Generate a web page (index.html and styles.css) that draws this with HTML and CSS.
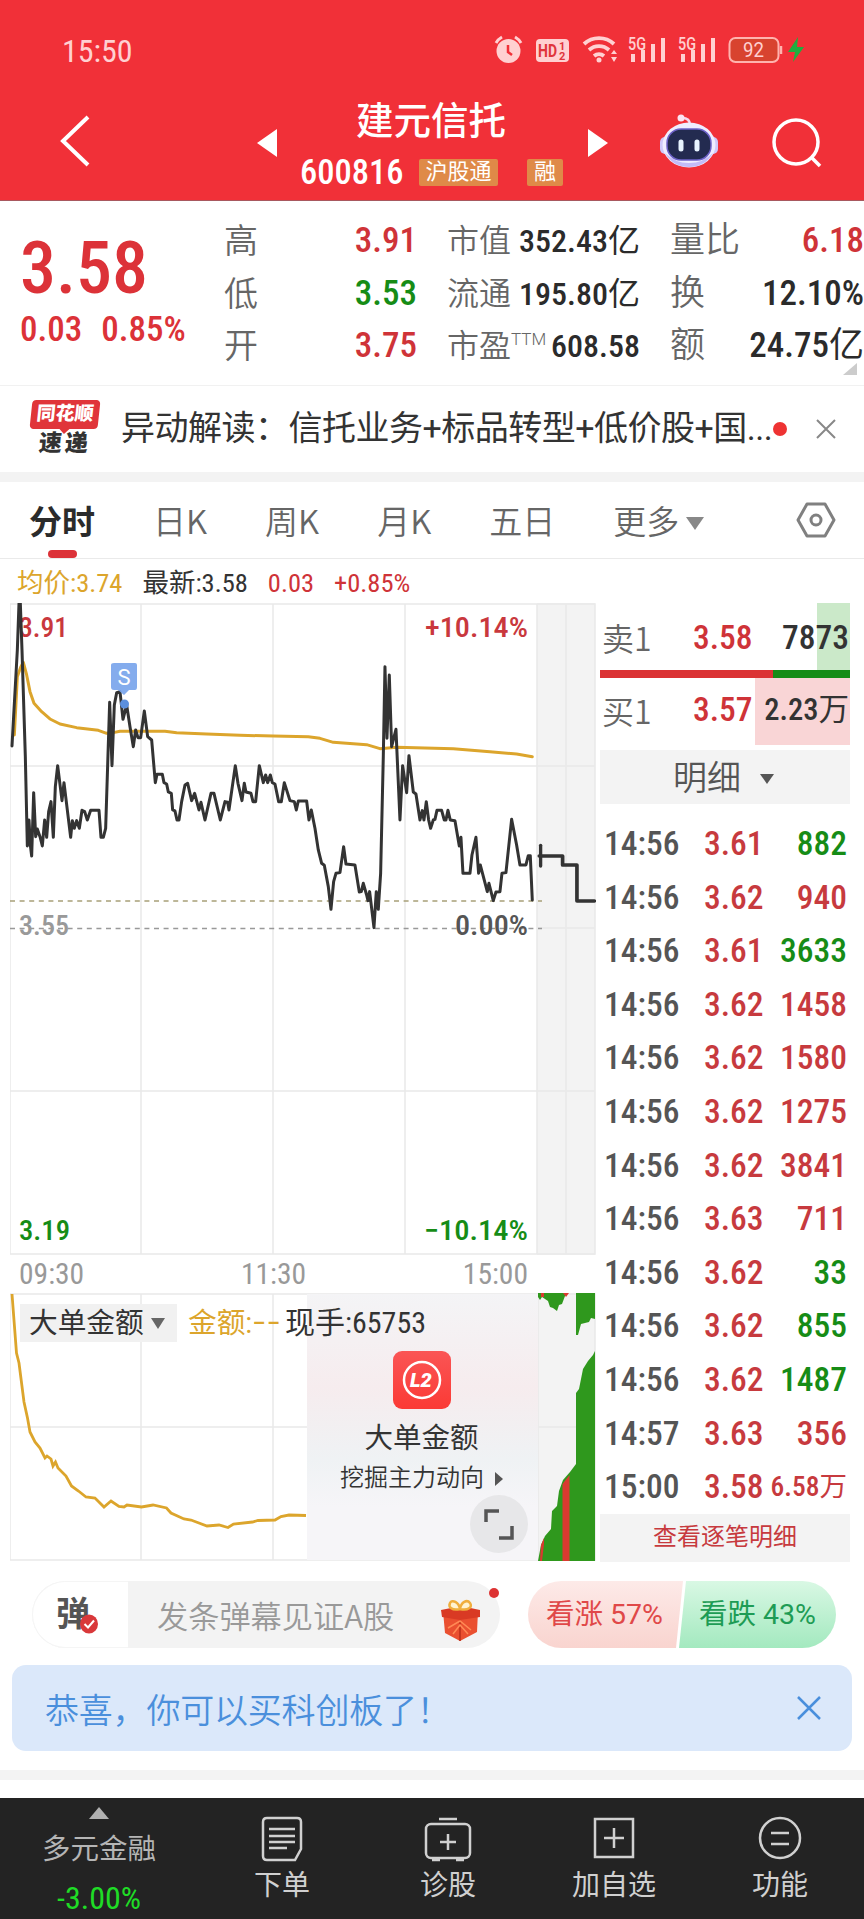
FILE: index.html
```html
<!DOCTYPE html>
<html lang="zh-CN">
<head>
  <meta charset="UTF-8" />
  <meta name="viewport" content="width=device-width, initial-scale=1.0"/>
  <title>建元信托 600816</title>
  <link rel="stylesheet" href="styles.css">
</head>
<body>

  <header>
    <div class="status">
      <span class="num clock">15:50</span>
      <svg width="320" height="36" viewBox="490 32 320 36">
        <g fill="#ffd0d1">
          <circle cx="508.500" cy="51" r="12"/>
          <path d="M496 43a16 16 0 0 1 6-6M521 43a16 16 0 0 0-6-6" fill="none" stroke="#ffd0d1" stroke-width="3"/>
          <path d="M508 45v7l4 3" fill="none" stroke="#f13038" stroke-width="2.500"/>
          <rect x="536" y="39" width="33" height="23" rx="4"/>
          <path d="M584 44a22 22 0 0 1 30 0M589 50a15 15 0 0 1 20 0M594 56a8 8 0 0 1 10 0" fill="none" stroke="#ffd0d1" stroke-width="3.800"/>
          <circle cx="599" cy="60" r="2.500"/>
          <path d="M611 54l3-4 3 4zM611 57l3 5 3-5z"/>
          <path d="M631 54h4v8h-4zM641 50h4v12h-4zM651 44h4v18h-4zM661 38h4v24h-4z"/>
          <path d="M681 54h4v8h-4zM691 50h4v12h-4zM701 44h4v18h-4zM711 38h4v24h-4z"/>
          <rect x="729.500" y="38" width="49" height="24" rx="6" fill="#d8432f" stroke="#ffb3ae" stroke-width="2"/>
          <path d="M781 46v8" stroke="#ffb3ae" stroke-width="2.500"/>
          <text x="538" y="57" font-size="18" font-weight="700" fill="#e0353c" textLength="19" lengthAdjust="spacingAndGlyphs">HD</text>
          <text x="559" y="50" font-size="11" font-weight="700" fill="#e0353c">1</text>
          <text x="559" y="60" font-size="11" font-weight="700" fill="#e0353c">2</text>
          <text x="628" y="50" font-size="18" font-weight="500" textLength="18" lengthAdjust="spacingAndGlyphs">5G</text>
          <text x="678" y="50" font-size="18" font-weight="500" textLength="18" lengthAdjust="spacingAndGlyphs">5G</text>
          <text x="743" y="57" font-size="20" textLength="21" lengthAdjust="spacingAndGlyphs">92</text>
        </g>
        <path d="M798 37l-10 15h7l-2 10 11-15h-7z" fill="#1fae3f"/>
      </svg>
    </div>
    <div class="titlebar">
      <svg class="back" width="34" height="54" viewBox="0 0 34 54"><path d="M29 3L4 27l25 24" fill="none" stroke="#fff" stroke-width="4"/></svg>
      <svg class="prev" width="20" height="28" viewBox="0 0 20 28"><path d="M20 0v28L0 14z" fill="#fff"/></svg>
      <div class="stock">
        <h1>建元信托</h1>
        <div class="code"><span class="num">600816</span><i>沪股通</i><i>融</i></div>
      </div>
      <svg class="next" width="20" height="28" viewBox="0 0 20 28"><path d="M0 0v28l20-14z" fill="#fff"/></svg>
      <svg class="robot" width="60" height="56" viewBox="0 0 60 56">
        <path d="M31 11Q31 4 23 4" fill="none" stroke="#f6d9ee" stroke-width="2.500"/>
        <circle cx="22" cy="4" r="3.500" fill="#fbe4f3"/>
        <rect x="1" y="23" width="58" height="17" rx="5" fill="#cfc8fa"/>
        <ellipse cx="30" cy="31" rx="26.500" ry="22.500" fill="#efedff"/>
        <path d="M6 39q8 14 24 14t24-14q-10 10-24 10T6 39z" fill="#c3bbf8"/>
        <rect x="8" y="15" width="44" height="31" rx="14" fill="#232b50" stroke="#6d62c8" stroke-width="1.500"/>
        <path d="M22 28v7M38 28v7" stroke="#e8f4ff" stroke-width="5" stroke-linecap="round"/>
      </svg>
      <svg class="search" width="52" height="52" viewBox="0 0 52 52" fill="none" stroke="#fff" stroke-width="3.500"><circle cx="25" cy="25" r="22"/><path d="M41 41l8 8"/></svg>
    </div>
  </header>

  <section class="quote">
    <div class="price">
      <div class="num last">3.58</div>
      <div class="change"><span class="num">0.03</span><span class="num">0.85%</span></div>
    </div>
    <dl class="c1">
      <dt>高</dt><dd class="num red">3.91</dd>
      <dt>低</dt><dd class="num green">3.53</dd>
      <dt>开</dt><dd class="num red">3.75</dd>
    </dl>
    <dl class="c2">
      <dt>市值</dt><dd class="num">352.43<u>亿</u></dd>
      <dt>流通</dt><dd class="num">195.80<u>亿</u></dd>
      <dt>市盈<sup>TTM</sup></dt><dd class="num">608.58</dd>
    </dl>
    <dl class="c3">
      <dt>量比</dt><dd class="num red">6.18</dd>
      <dt>换</dt><dd class="num">12.10%</dd>
      <dt>额</dt><dd class="num">24.75<u>亿</u></dd>
    </dl>
  </section>

  <section class="news">
    <div class="logo"><b>同花顺</b><em>速递</em></div>
    <p>异动解读：信托业务+标品转型+低价股+国...</p>
    <span class="dot"></span>
    <svg width="22" height="22" viewBox="0 0 22 22"><path d="M2 2l18 18M20 2L2 20" stroke="#888" stroke-width="2"/></svg>
  </section>

  <nav class="tabs">
    <a class="on">分时</a><a>日K</a><a>周K</a><a>月K</a><a>五日</a><a class="more">更多</a>
    <svg width="40" height="38" viewBox="0 0 40 38" fill="none" stroke="#808080" stroke-width="3"><path d="M11 3h18l9 16-9 16H11L2 19z" stroke-linejoin="round"/><circle cx="20" cy="19" r="5"/></svg>
  </nav>

  <main>
    <div class="left">
      <div class="legend">
        <span class="num gold">均价:3.74</span><span class="num">最新:3.58</span><span class="num red">0.03</span><span class="num red">+0.85%</span>
      </div>

      <svg class="chart" width="586" height="652" viewBox="0 0 586 652">
        <rect x="527" y="0" width="58" height="652" fill="#f3f3f3"/>
        <g fill="none" stroke="#e9e9e9" stroke-width="1.500">
          <path d="M0 1H585V651H0zM131 1V651M263 1V651M395 1V651M527 1V651M556 1V651M0 163H585M0 488H585M527 325H585"/>
        </g>
        <g stroke="#999" stroke-width="1.500" stroke-dasharray="5 4.600">
          <path d="M0 298H532" stroke="#a8a078"/>
          <path d="M0 325.500H532"/>
        </g>
        <g class="num" font-size="28">
          <text x="9" y="34" fill="#c9383d" textLength="49" lengthAdjust="spacingAndGlyphs">3.91</text>
          <text x="415" y="34" fill="#c9383d" textLength="103" lengthAdjust="spacingAndGlyphs">+10.14%</text>
          <text x="9" y="332" fill="#999" textLength="50" lengthAdjust="spacingAndGlyphs">3.55</text>
          <text x="445" y="332" fill="#555" textLength="73" lengthAdjust="spacingAndGlyphs">0.00%</text>
          <text x="9" y="637" fill="#168c16" textLength="51" lengthAdjust="spacingAndGlyphs">3.19</text>
          <text x="414" y="637" fill="#168c16" textLength="104" lengthAdjust="spacingAndGlyphs">−10.14%</text>
        </g>
        <g fill="none" stroke-linejoin="round" stroke-linecap="round" stroke-width="9">
          <g stroke="#dca52c" transform="translate(-10 -13) scale(.3333)">
            <polyline points="43,435 52,260 62,232 70,217 80,255 90,305 102,340 125,365 150,387 180,402 230,413 295,421 320,430 340,428 360,424 495,424 530,428 620,432 720,436 820,438 925,440 960,445 1000,457 1100,464 1140,476 1190,472 1360,476 1470,485 1550,492 1597,500"/>
          </g>
          <g stroke="#333" transform="translate(-10 -13) scale(.3333)">
            <polyline points="36,468 52,180 57,40 61,40 66,180 76,500 82,768 87,690 91,765 95,798 101,608 107,740 112,717 120,740 127,768 134,690 140,742 146,665 153,635 160,742 166,590 173,527 186,632 192,578 212,742 217,692 223,715 230,692 238,715 246,661 254,665 262,690 272,661 297,661 303,742 310,742 317,715 329,337 336,527 343,345 350,308 360,305 369,388 380,345 390,410 400,470 407,420 414,443 422,443 433,363 443,440 455,450 466,578 471,553 487,553 492,578 500,582 505,606 514,610 518,660 525,663 531,690 537,690 545,635 555,585 563,580 575,632 584,610 597,660 603,637 615,690 633,610 642,610 661,690 675,635 683,637 687,660 706,527 714,580 726,632 733,580 738,606 753,610 759,635 767,635 778,527 790,578 797,555 803,578 811,555 817,578 825,582 836,635 844,635 853,578 870,632 883,635 889,660 895,633 920,633 927,690 934,660 945,715 955,780 965,820 973,826 985,890 993,958 1001,875 1008,850 1020,848 1031,770 1038,822 1065,825 1078,906 1084,905 1090,880 1100,915 1104,932 1109,905 1122,1013 1129,905 1135,958 1142,850 1150,500 1155,230 1161,445 1168,255 1175,470 1188,418 1200,690 1208,527 1220,608 1227,497 1240,606 1248,612 1260,690 1267,662 1272,690 1279,635 1286,690 1292,715 1300,690 1305,688 1311,661 1325,661 1333,690 1338,690 1344,661 1351,690 1365,692 1378,768 1383,742 1389,850 1410,850 1416,795 1428,742 1436,850 1441,825 1462,905 1467,880 1480,932 1488,906 1500,905 1506,850 1518,848 1535,688 1550,765 1560,825 1578,825 1585,797 1591,797 1597,930"/>
            <polyline points="1622,766 1622,828" stroke-width="10"/>
            <polyline points="1618,798 1688,798 1688,825 1731,825 1731,933 1783,933" stroke-width="11"/>
          </g>
        </g>
        <path d="M104 60h21q2 0 2 2v22q0 3-2 3h-6l-5 5-6-5h-4q-3 0-3-3V62q0-2 3-2z" fill="#7ba6ec" fill-opacity=".93"/>
        <circle cx="114.500" cy="101" r="4.500" fill="#5b8fdd"/>
        <text x="107.500" y="82" font-size="22" fill="#fff">S</text>
      </svg>

      <div class="axis"><span class="num">09:30</span><span class="num">11:30</span><span class="num">15:00</span></div>

      <div class="sub">
        <svg class="lines" width="586" height="268" viewBox="0 0 586 268">
          <rect x="528" width="57" height="268" fill="#f3f3f3"/>
          <path d="M0 1H585V267H0zM131 1V267M263 1V267M0 134H585M528 1V267" fill="none" stroke="#e9e9e9" stroke-width="1.500"/>
          <polyline fill="none" stroke="#dca52c" stroke-width="2.800" points="2,1 6.500,60 9,70 14,109 17.500,125 20,139 25,149 30,155 35,165 37,163 41,166 43,173 45.500,169 48,175 56,183 61.500,193 68.500,198 76,204 85,205 94,214 101,208 109,213.500 114,214 117,212 131.500,214 143,212 156.500,215 161,220 174,226 181,227 197,233 209,232 218,234.500 223.500,231 242.500,229 248,227.500 265,227 271,223.500 279,222 296,222.500"/>
          <g fill="#2f981d">
            <path d="M528 0h27v3l-3 8-3 1-2 6-4-3-3-1-2-6-6-4-2 3-2-3z"/>
            <path d="M566 0h19v26l-4-1-2 4-8 2-3 11h-2z"/>
            <path d="M528 268l3-16 4-9 6-7 1-18 5-5 2-15 4-11 7-8 6-8V100l3-4 4-20 5-8 5-6 2-4v210z"/>
          </g>
          <path d="M552.500 268v-77l7-9v86zM530 268l1-16 3-7v6l-2 17zM531 0h3v4h-3zM553 0h6l-3 4z" fill="#d93a30"/>
        </svg>
        <div class="promo">
          <svg width="58" height="58" viewBox="0 0 58 58"><defs><linearGradient id="l2" x2="0" y2="1"><stop stop-color="#fa5555"/><stop offset="1" stop-color="#fb3a35"/></linearGradient></defs><rect width="58" height="58" rx="9" fill="url(#l2)"/><circle cx="29" cy="29" r="18" fill="none" stroke="#fff" stroke-width="2.500"/><text x="17" y="36" font-size="20" font-weight="900" font-style="italic" fill="#fff">L2</text></svg>
          <strong>大单金额</strong>
          <small>挖掘主力动向</small>
        </div>
        <div class="caption"><span class="pick">大单金额</span><span class="num gold">金额:−−</span><span class="num">现手:65753</span></div>
        <svg class="expand" width="58" height="58" viewBox="0 0 58 58"><circle cx="29" cy="29" r="29" fill="#e7e7e9"/><path d="M16 27V16h13M42 31v12H29" fill="none" stroke="#555" stroke-width="3.500"/></svg>
      </div>
    </div>

    <aside>
      <div class="level sell"><span>卖1</span><b class="num red">3.58</b><b class="num vol">7873</b></div>
      <div class="ratio"><i></i></div>
      <div class="level buy"><span>买1</span><b class="num red">3.57</b><b class="num vol">2.23<u>万</u></b></div>
      <div class="detail">明细</div>
      <ul class="ticks">
        <li class="num"><span>14:56</span><b>3.61</b><b class="green">882</b></li>
        <li class="num"><span>14:56</span><b>3.62</b><b>940</b></li>
        <li class="num"><span>14:56</span><b>3.61</b><b class="green">3633</b></li>
        <li class="num"><span>14:56</span><b>3.62</b><b>1458</b></li>
        <li class="num"><span>14:56</span><b>3.62</b><b>1580</b></li>
        <li class="num"><span>14:56</span><b>3.62</b><b>1275</b></li>
        <li class="num"><span>14:56</span><b>3.62</b><b>3841</b></li>
        <li class="num"><span>14:56</span><b>3.63</b><b>711</b></li>
        <li class="num"><span>14:56</span><b>3.62</b><b class="green">33</b></li>
        <li class="num"><span>14:56</span><b>3.62</b><b class="green">855</b></li>
        <li class="num"><span>14:56</span><b>3.62</b><b class="green">1487</b></li>
        <li class="num"><span>14:57</span><b>3.63</b><b>356</b></li>
        <li class="num"><span>15:00</span><b>3.58</b><b class="wan">6.58<u>万</u></b></li>
      </ul>
      <div class="all">查看逐笔明细</div>
    </aside>
  </main>

  <section class="social">
    <div class="danmu">
      <div class="toggle">弹<svg width="18" height="20" viewBox="0 0 18 20"><ellipse cx="9" cy="10" rx="9" ry="9.500" fill="#d9383a"/><path d="M4.500 10l3.500 3.500 6-7" fill="none" stroke="#fff" stroke-width="2"/></svg></div>
      <span>发条弹幕见证A股</span>
      <svg class="gift" width="42" height="44" viewBox="0 0 42 44">
        <path d="M3 13l17 3 18-3-1 21-17 9-15-8z" fill="#ea5030"/>
        <path d="M1 12l20-4 19 4v7l-20 3-18-3z" fill="#d93a24"/>
        <path d="M20 22v21" stroke="#b92c18" stroke-width="1.500"/>
        <path d="M8 30l12-7 11 9M13 36l7-9 8 9" stroke="#ff8a55" stroke-width="1.500" fill="none"/>
        <path d="M20 11C12 13 8 9 10 5s9-1 10 6c1-7 7-10 10-6s-2 8-10 6z" fill="#fff3d0" stroke="#f0ae3c" stroke-width="2.500"/>
      </svg>
      <i class="dot"></i>
    </div>
    <div class="vote"><span class="up">看涨 57%</span><span class="down">看跌 43%</span></div>
  </section>

  <section class="banner">
    <p>恭喜，你可以买科创板了！</p>
    <svg width="26" height="26" viewBox="0 0 26 26"><path d="M2 2l22 22M24 2L2 24" stroke="#4a8fdc" stroke-width="2.500"/></svg>
  </section>

  <footer>
    <div class="sector">
      <svg width="20" height="12" viewBox="0 0 20 12"><path d="M10 0l10 12H0z" fill="#b0b0b0"/></svg>
      <span>多元金融</span>
      <span class="num fall">-3.00%</span>
    </div>
    <div class="item">
      <svg width="46" height="46" viewBox="0 0 46 46"><path d="M8 2h30q4 0 4 4v27l-6 11H8q-4 0-4-4V6q0-4 4-4zM10 13h26M10 20h26M10 26h26M10 32h18"/></svg>
      <span>下单</span>
    </div>
    <div class="item">
      <svg width="50" height="46" viewBox="0 0 50 46"><rect x="3" y="8" width="44" height="34" rx="5"/><path d="M16 3h18M25 18v16M17 26h16M9 44h8M33 44h8"/></svg>
      <span>诊股</span>
    </div>
    <div class="item">
      <svg width="46" height="46" viewBox="0 0 46 46"><path d="M4 3h38v38H4zM23 12v20M13 22h20"/></svg>
      <span>加自选</span>
    </div>
    <div class="item">
      <svg width="46" height="46" viewBox="0 0 46 46"><circle cx="23" cy="22" r="20"/><path d="M14 17h18M14 28h18"/></svg>
      <span>功能</span>
    </div>
  </footer>

</body>
</html>
```
FILE: styles.css
```css
:root {
  --red: #cf3338;
  --green: #168c16;
  --gold: #dca52c;
  --gray: #666;
  --band: #f3f3f3;
}

* {
  box-sizing: border-box;
}

body {
  margin: 0;
  width: 864px;
  height: 1919px;
  overflow: hidden;
  display: flex;
  flex-direction: column;
  background: #fff;
  color: #333;
  font-family: Roboto, "Noto Sans CJK SC", sans-serif;
  font-weight: 400;
}

h1, p, dl, dd, ul {
  margin: 0;
  padding: 0;
}

i, em {
  font-style: normal;
}

/* unit after a number, lighter than the digits */
u {
  text-decoration: none;
  font-weight: 400;
}

svg {
  display: block;
  flex: none;
}

.num {
  font-stretch: 85%;
  font-weight: 500;
  white-space: nowrap;
}

.red { color: var(--red); }
.green { color: var(--green); }
.gold { color: var(--gold); }

/* header */
header {
  height: 201px;
  background: #f13038;
  color: #fff;
  border-bottom: 1px solid #a8585e;
}

.status {
  height: 68px;
  padding: 32px 54px 0 62px;
  display: flex;
  justify-content: space-between;
}

.clock {
  font-size: 32px;
  line-height: 38px;
  font-weight: 400;
  color: #ffd0d1;
}

.titlebar {
  height: 132px;
  display: flex;
  padding-left: 59px;
}

.back { margin-top: 46px; }
.prev { margin: 61px 0 0 164px; }
.stock { width: 311px; padding-left: 23px; }
.next { margin-top: 61px; }
.robot { margin: 46px 0 0 51px; }
.search { margin: 49px 0 0 52px; }

h1 {
  font-size: 37.5px;
  font-weight: 500;
  line-height: 48px;
  margin: 29px 0 0 56px;
}

.code {
  display: flex;
  align-items: center;
  height: 34px;
  margin-top: 10px;
  font-size: 34.5px;
}

.code .num { width: 119px; }

.code i {
  height: 27px;
  width: 79px;
  text-align: center;
  font-size: 22px;
  line-height: 26px;
  background: #df8a48;
  border-radius: 2px;
}

.code i + i {
  width: 36px;
  margin-left: 29px;
}

/* quote */
.quote {
  height: 184px;
  display: flex;
  padding: 14px 0 0 20px;
  position: relative;
}

.quote::after {
  content: "";
  position: absolute;
  right: 7px;
  bottom: 10px;
  border: solid transparent;
  border-width: 0 0 12px 14px;
  border-bottom-color: #ccc;
}

.price {
  width: 204px;
  color: #dc3238;
}

.last {
  font-size: 72px;
  line-height: 84px;
  margin-top: 12px;
}

.change {
  display: flex;
  gap: 19px;
  font-size: 35px;
  line-height: 37px;
}

dl {
  display: grid;
  grid-template-columns: auto 1fr;
  grid-auto-rows: 52.5px;
  line-height: 52px;
  font-size: 35px;
  color: #2b2b2b;
}

dt {
  color: var(--gray);
  font-size: 34px;
  font-weight: 350;
  white-space: nowrap;
}

dd { text-align: right; }

.c1 { width: 193px; }
.c2 { width: 193px; margin-left: 30px; font-size: 32px; grid-template-columns: 62px 1fr; }
.c2 dt { font-size: 32px; }
.c3 { width: 194px; margin-left: 30px; }
.c3 dt { font-size: 35px; }

sup {
  font-size: 17px;
  line-height: 0;
}

/* news */
.news {
  height: 97px;
  border-top: 1px solid #f1f1f1;
  border-bottom: 10px solid var(--band);
  display: flex;
  align-items: center;
  padding-left: 31px;
}

.logo {
  width: 68px;
  text-align: center;
  font-weight: 900;
  line-height: 1;
}

.logo b {
  display: block;
  position: relative;
  height: 29px;
  font-size: 19px;
  line-height: 28px;
  background: #e0353a;
  color: #fff;
  border-radius: 4px;
  transform: skewX(-6deg);
}

.logo b::after {
  content: "";
  position: absolute;
  left: 29px;
  top: 28px;
  border: solid transparent;
  border-width: 6px 6px 0;
  border-top-color: #e0353a;
}

.logo em {
  display: block;
  font-size: 23px;
  line-height: 29px;
  letter-spacing: 3px;
  transform: skewX(-5deg);
}

.news p {
  width: 650px;
  margin-left: 22px;
  font-size: 34px;
  line-height: 48px;
  margin-bottom: 2px;
  letter-spacing: -0.5px;
  white-space: nowrap;
}

.news .dot {
  width: 14px;
  height: 14px;
  border-radius: 50%;
  background: #e33;
  margin: 0 28px 0 2px;
}

/* tabs */
.tabs {
  height: 77px;
  border-bottom: 1px solid #eaeaea;
  display: flex;
  align-items: center;
  padding-left: 29px;
  font-family: "Noto Sans CJK SC", sans-serif;
  font-size: 33px;
  line-height: 48px;
  font-weight: 350;
  color: var(--gray);
}

.tabs a {
  position: relative;
  margin-right: 58px;
  white-space: nowrap;
}

.tabs .on {
  font-weight: 700;
  color: #2b2b2b;
}

.on::after {
  content: "";
  position: absolute;
  left: 19px;
  bottom: -14px;
  width: 29px;
  height: 8px;
  border-radius: 4px;
  background: #dc3238;
}

.more::after, .pick::after, .detail::after {
  content: "";
  display: inline-block;
  border: solid transparent;
  border-width: 13px 9px 0;
  border-top-color: #888;
  margin-left: 7px;
  vertical-align: 4px;
}

.tabs svg {
  margin-left: auto;
  margin-right: 28px;
}

/* charts */
main {
  height: 1002px;
  display: flex;
}

.left {
  width: 590px;
  padding-left: 10px;
}

.legend {
  height: 44px;
  line-height: 48px;
  display: flex;
  gap: 20px;
  padding-left: 7px;
  font-size: 26px;
}

.legend .num { font-weight: 400; font-size: 26.5px; }

.axis {
  height: 38px;
  line-height: 39px;
  width: 518px;
  display: flex;
  justify-content: space-between;
  padding-left: 9px;
  font-size: 29.5px;
  color: #999;
}

.axis .num { font-weight: 400; }

.sub {
  position: relative;
  height: 268px;
  width: 586px;
}

.promo {
  position: absolute;
  left: 297px;
  top: 1px;
  width: 231px;
  height: 266px;
  padding: 57px 2px 0 0;
  display: flex;
  flex-direction: column;
  align-items: center;
  background: linear-gradient(#f4f4f6, #f6ecee 35%, #eff2f4 62%, #f6f5f8 80%);
}

.promo strong {
  font-size: 28.5px;
  font-weight: 400;
  line-height: 40px;
  margin-top: 10px;
}

.promo small {
  font-size: 24px;
  line-height: 38px;
  font-weight: 350;
}

.promo small::after {
  content: "";
  display: inline-block;
  border: solid transparent;
  border-width: 7px 0 7px 8px;
  border-left-color: #555;
  margin-left: 11px;
}

.caption {
  position: absolute;
  left: 10px;
  top: 11px;
  display: flex;
  font-size: 28.7px;
  line-height: 38px;
}

.caption .num { font-weight: 400; }
.caption .num:last-child { font-size: 30px; }

.pick {
  width: 157px;
  padding-left: 9px;
  margin-right: 11px;
  background: #f1f1f1;
}

.pick::after {
  border-width: 11px 7px 0;
  border-top-color: #666;
}

.caption .gold { width: 97px; }

.expand {
  position: absolute;
  left: 460px;
  top: 202px;
}

/* order book */
aside {
  width: 250px;
  margin: 44px 0 0 10px;
}

.level {
  height: 67px;
  line-height: 69px;
  display: grid;
  grid-template-columns: 91px 58px 1fr;
  padding: 0 1px 0 2px;
  font-size: 33.5px;
}

.level span {
  font-family: "Noto Sans CJK SC", sans-serif;
  font-size: 32px;
  font-weight: 350;
  color: var(--gray);
}

.vol { text-align: right; }

.sell { background: linear-gradient(#cbe9c9, #cbe9c9) right / 33px 100% no-repeat; }

.buy {
  line-height: 64px;
  background: linear-gradient(#f9d5d6, #f9d5d6) right / 95px 100% no-repeat;
}

.buy .vol { font-size: 30.5px; }

.ratio {
  height: 8px;
  background: #168c16;
}

.ratio i {
  display: block;
  width: 173px;
  height: 8px;
  background: #db3234;
}

.detail {
  height: 54px;
  margin-top: 5px;
  line-height: 57px;
  text-align: center;
  font-size: 34px;
  font-weight: 350;
  color: #555;
  background: var(--band);
}

.detail::after {
  border-width: 10px 7px 0;
  border-top-color: #555;
  margin: 0 3px 0 19px;
  vertical-align: 6px;
}

.ticks {
  list-style: none;
  padding: 13px 3px 0 4px;
}

.ticks li {
  height: 53.6px;
  line-height: 53px;
  display: grid;
  grid-template-columns: 100px 58px 1fr;
  font-size: 33.5px;
  color: #555;
}

.ticks b, .level b { font-weight: 500; }
.ticks b { color: #c73a3e; }
.ticks .green { color: var(--green); }
.ticks b:last-child { text-align: right; }
.ticks .wan { font-size: 27.5px; }

.all {
  height: 48px;
  line-height: 46px;
  text-align: center;
  font-size: 24px;
  color: #c73a3e;
  background: var(--band);
}

/* bottom */
.social {
  height: 68px;
  margin-top: 20px;
  padding-left: 32px;
  display: flex;
}

.danmu {
  position: relative;
  width: 468px;
  height: 67px;
  display: flex;
  align-items: center;
  border-radius: 34px;
  background: var(--band);
  font-family: "Noto Sans CJK SC", sans-serif;
  font-size: 31.2px;
  font-weight: 350;
  color: #999;
}

.toggle {
  position: relative;
  width: 96px;
  height: 67px;
  padding-left: 23px;
  line-height: 60px;
  font-size: 34px;
  font-weight: 700;
  color: #555;
  background: #fff;
  border: 1px solid #f5f5f5;
  border-right: 0;
  border-radius: 34px 0 0 34px;
}

.toggle svg {
  position: absolute;
  left: 47px;
  top: 32px;
}

.danmu span {
  margin-left: 29px;
  line-height: 66px;
}

.gift {
  position: absolute;
  left: 408px;
  top: 17px;
}

.danmu .dot {
  position: absolute;
  right: 1px;
  top: 7px;
  width: 10px;
  height: 10px;
  border-radius: 50%;
  background: #d33;
}

.vote {
  width: 308px;
  height: 67px;
  margin-left: 28px;
  display: flex;
  border-radius: 34px;
  overflow: hidden;
  font-size: 28.5px;
  line-height: 67px;
  white-space: nowrap;
}

.up {
  width: 155px;
  padding-left: 18px;
  color: #e04848;
  background: linear-gradient(#fdeae8, #f9d4cf);
  clip-path: polygon(0 0, 100% 0, 148px 100%, 0 100%);
}

.down {
  flex: 1;
  margin-left: -4px;
  padding-left: 20px;
  color: #1e9c55;
  background: linear-gradient(#d9f8e4, #a3e9bf);
  clip-path: polygon(7px 0, 100% 0, 100% 100%, 0 100%);
}

.banner {
  height: 86px;
  margin: 16px 12px 0;
  padding: 0 30px 0 33px;
  display: flex;
  align-items: center;
  justify-content: space-between;
  border-radius: 14px;
  background: #dbe8fa;
  font-size: 34px;
  font-weight: 350;
  letter-spacing: -0.2px;
  color: #4a8fdc;
}

footer {
  position: relative;
  display: flex;
  box-sizing: content-box;
  height: 121px;
  margin-top: auto;
  padding-left: 33px;
  border-top: 28px solid transparent;
  background: #232323 padding-box;
  color: #d0d0d0;
  font-size: 28px;
}

footer::before {
  content: "";
  position: absolute;
  left: 0;
  right: 0;
  top: -28px;
  height: 10px;
  background: var(--band);
}

.sector, .item {
  display: flex;
  flex-direction: column;
  align-items: center;
}

.sector {
  width: 132px;
  padding-top: 9px;
  margin-right: 34px;
  line-height: 48px;
  color: #b5b5b5;
}

.sector span:nth-child(2) {
  margin-top: 7px;
  font-size: 28.5px;
}

.sector .fall {
  color: #1fdc26;
  font-weight: 400;
  font-size: 32px;
}

.item {
  width: 166px;
  padding-top: 18px;
  line-height: 44px;
}

.item svg {
  margin-bottom: 2px;
  fill: none;
  stroke: #d0d0d0;
  stroke-width: 2.5;
}
```
